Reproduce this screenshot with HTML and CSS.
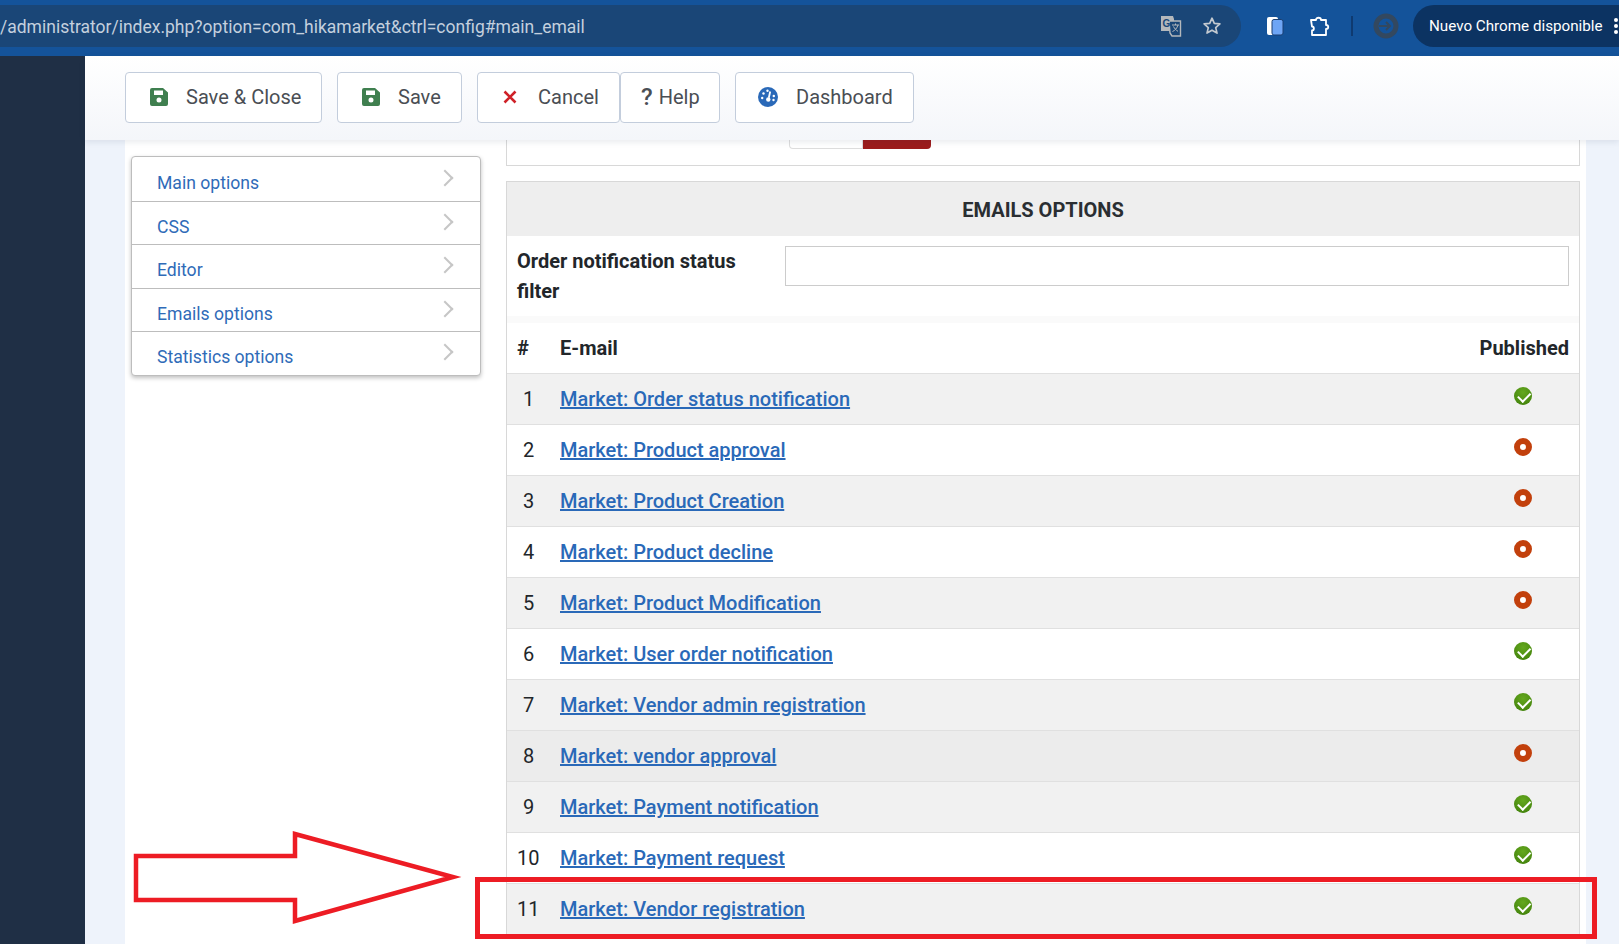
FILE: index.html
```
<!DOCTYPE html>
<html lang="en">
<head>
<meta charset="utf-8">
<title>HikaMarket configuration</title>
<link rel="stylesheet" href="styles.css">
</head>
<body>
<header class="chrome">
  <div class="address">
    <span class="url">/administrator/index.php?option=com_hikamarket&amp;ctrl=config#main_email</span>
    <svg class="ic-translate" viewBox="0 0 22 22" width="22" height="22">
      <path d="M1 1h12l1 3v12H1z" fill="#b4b8bc"/>
      <path d="M9 6h11.500v15H12l-2-3z" fill="#1a4677" stroke="#b4b8bc" stroke-width="1.400"/>
      <text x="2.600" y="12" class="ic-g">G</text>
      <path d="M12 10h7M15.500 8.500v1.500M18 10c-.8 3-3 5.500-5.500 6.500M13.500 11.500c1 2 2.500 3.700 4.500 4.800" fill="none" stroke="#b4b8bc" stroke-width="1"/>
    </svg>
    <svg class="ic-star" viewBox="0 0 20 20" width="20" height="20">
      <path d="M10 2.200l2.300 5.200 5.600.5-4.200 3.700 1.300 5.500-5-2.900-5 2.900 1.300-5.500L2.100 7.900l5.600-.5z" fill="none" stroke="#c3c9d0" stroke-width="1.700" stroke-linejoin="round"/>
    </svg>
  </div>
  <div class="tools">
    <svg class="ic-tabs" viewBox="0 0 18 20" width="18" height="20">
      <rect x="1" y="1" width="11" height="18" rx="2" fill="#fff"/>
      <rect x="6" y="3.500" width="11" height="15.500" rx="2" fill="#6ea5f5" stroke="#1a3f72" stroke-width="1"/>
    </svg>
    <svg class="ic-puzzle" viewBox="0 0 22 22" width="22" height="22">
      <path d="M2 5h5c0-3 5-3 5 0h5v5c3 0 3 4 0 4v6H3v-4.500c2.500 0 2.500-4 0-4z" fill="none" stroke="#fff" stroke-width="1.800" stroke-linejoin="round"/>
    </svg>
    <span class="divider"></span>
    <svg class="ic-profile" viewBox="0 0 26 26" width="26" height="26">
      <circle cx="13" cy="13" r="10" fill="none" stroke="#33485f" stroke-width="5"/>
      <path d="M6 13h11M13 9l4 4-4 4" fill="none" stroke="#33485f" stroke-width="2"/>
    </svg>
    <div class="update"><span>Nuevo Chrome disponible</span><b class="kebab"><i></i><i></i><i></i></b></div>
  </div>
</header>

<div class="app">
  <aside class="rail"></aside>
  <main class="main">
    <nav class="toolbar">
      <a class="btn btn-save-close"><svg class="ic-btn" viewBox="0 0 18 18" width="18" height="18"><path class="save" fill-rule="evenodd" d="M2 0h11l5 4.500V16a2 2 0 0 1-2 2H2a2 2 0 0 1-2-2V2a2 2 0 0 1 2-2zm2 2.500v4.500h9V2.500zM9 9.500a2.500 2.500 0 1 0 0 5 2.500 2.500 0 0 0 0-5z"/></svg><span>Save &amp; Close</span></a>
      <a class="btn btn-save"><svg class="ic-btn" viewBox="0 0 18 18" width="18" height="18"><path class="save" fill-rule="evenodd" d="M2 0h11l5 4.500V16a2 2 0 0 1-2 2H2a2 2 0 0 1-2-2V2a2 2 0 0 1 2-2zm2 2.500v4.500h9V2.500zM9 9.500a2.500 2.500 0 1 0 0 5 2.500 2.500 0 0 0 0-5z"/></svg><span>Save</span></a>
      <a class="btn btn-cancel"><svg class="ic-btn" viewBox="0 0 14 14" width="14" height="14"><path d="M1.500 1.500l11 11M12.500 1.500l-11 11" stroke="#cf2128" stroke-width="2.600" fill="none"/></svg><span>Cancel</span></a>
      <a class="btn btn-help"><b class="q">?</b><span>Help</span></a>
      <a class="btn btn-dash"><svg class="ic-btn" viewBox="0 0 20 20" width="20" height="20"><circle cx="10" cy="10" r="10" fill="#2a69b8"/><path d="M12.200 4.500L10.800 10.800" stroke="#fff" stroke-width="1.800"/><circle cx="10.300" cy="12.500" r="2.200" fill="#fff"/><circle cx="4.200" cy="11" r="1.200" fill="#fff"/><circle cx="5.500" cy="6.500" r="1.200" fill="#fff"/><circle cx="9.500" cy="3.800" r="1.200" fill="#fff"/><circle cx="15.800" cy="9" r="1.200" fill="#fff"/><circle cx="15.500" cy="13" r="1.200" fill="#fff"/></svg><span>Dashboard</span></a>
    </nav>

    <div class="panel">
      <ul class="menu">
        <li><a>Main options</a><i class="chev"></i></li>
        <li><a>CSS</a><i class="chev"></i></li>
        <li><a>Editor</a><i class="chev"></i></li>
        <li><a>Emails options</a><i class="chev"></i></li>
        <li><a>Statistics options</a><i class="chev"></i></li>
      </ul>
      <div class="content">
        <section class="prev">
          <div class="toggle"><span class="toggle-off"></span><span class="toggle-on"></span></div>
        </section>
        <section class="emails">
          <h2>EMAILS OPTIONS</h2>
          <div class="filter">
            <label>Order notification status filter</label>
            <div class="input"></div>
          </div>
          <table>
            <thead>
              <tr><th class="n">#</th><th>E-mail</th><th class="pub">Published</th></tr>
            </thead>
            <tbody>
              <tr class="alt"><td class="n">1</td><td><a>Market: Order status notification</a></td><td class="st"><i class="ok"></i></td></tr>
              <tr><td class="n">2</td><td><a>Market: Product approval</a></td><td class="st"><i class="off"></i></td></tr>
              <tr class="alt"><td class="n">3</td><td><a>Market: Product Creation</a></td><td class="st"><i class="off"></i></td></tr>
              <tr><td class="n">4</td><td><a>Market: Product decline</a></td><td class="st"><i class="off"></i></td></tr>
              <tr class="alt"><td class="n">5</td><td><a>Market: Product Modification</a></td><td class="st"><i class="off"></i></td></tr>
              <tr><td class="n">6</td><td><a>Market: User order notification</a></td><td class="st"><i class="ok"></i></td></tr>
              <tr class="alt"><td class="n">7</td><td><a>Market: Vendor admin registration</a></td><td class="st"><i class="ok"></i></td></tr>
              <tr class="hover"><td class="n">8</td><td><a>Market: vendor approval</a></td><td class="st"><i class="off"></i></td></tr>
              <tr class="alt"><td class="n">9</td><td><a>Market: Payment notification</a></td><td class="st"><i class="ok"></i></td></tr>
              <tr><td class="n">10</td><td><a>Market: Payment request</a></td><td class="st"><i class="ok"></i></td></tr>
              <tr class="alt"><td class="n">11</td><td><a>Market: Vendor registration</a></td><td class="st"><i class="ok"></i></td></tr>
            </tbody>
          </table>
        </section>
      </div>
    </div>
  </main>
</div>

<svg class="arrow" viewBox="0 0 340 100" width="340" height="100">
  <path d="M5 25H164V3L322 46 164 90V69H5z" fill="#fff" stroke="#ed1c24" stroke-width="4.500"/>
</svg>
<div class="redbox"></div>
</body>
</html>
```

FILE: styles.css
```
* { box-sizing: border-box; }
html, body { margin: 0; height: 944px; overflow: hidden; }
body { font-family: Roboto, "Liberation Sans", sans-serif; background: #eef3fb; color: #22262a; position: relative; }

/* browser chrome */
.chrome { height: 56px; background: #14539a; border-bottom: 1px solid #14539a; display: flex; align-items: flex-start; padding-top: 5px; }
.address { width: 1241px; height: 42px; background: #1a4677; border-radius: 0 21px 21px 0; display: flex; align-items: center; flex: none; }
.url { font-size: 17.500px; color: #c4d0de; flex: 1; white-space: nowrap; padding-top: 2px; }
.ic-translate { margin-right: 20px; }
.ic-g { font: bold 10px "Liberation Sans", sans-serif; fill: #1a4677; }
.ic-star { margin-right: 19px; }
.tools { display: flex; align-items: center; height: 42px; flex: 1; padding-left: 25px; }
.ic-puzzle { margin-left: 25px; }
.divider { width: 2px; height: 20px; background: #0f3a70; margin-left: 20px; }
.ic-profile { margin-left: 20px; }
.update { margin-left: 14px; flex: 1; height: 42px; background: #0c3362; border-radius: 21px 0 0 21px; color: #fff; font-size: 15.200px; display: flex; align-items: center; padding-left: 16px; white-space: nowrap; }
.kebab { display: flex; flex-direction: column; gap: 2px; margin-left: 11px; }
.kebab i { display: block; width: 4px; height: 4px; background: #fff; border-radius: 50%; }

/* app frame */
.app { display: flex; height: 888px; }
.rail { width: 85px; flex: none; background: #1f2f45; }
.main { flex: 1; min-width: 0; position: relative; }
.toolbar { height: 84px; position: relative; z-index: 2; display: flex; align-items: flex-start; padding: 16px 0 0 40px; background: linear-gradient(#fff, #f4f6fa); box-shadow: 0 2px 6px rgba(30,50,80,.1); }
.btn { height: 51px; display: flex; align-items: center; background: #fff; border: 1px solid #c3cddc; border-radius: 4px; font-size: 20px; color: #4a4e54; white-space: nowrap; padding-bottom: 2px; }
.btn-save-close { width: 197px; padding-left: 24px; margin-right: 15px; }
.btn-save { width: 125px; padding-left: 24px; margin-right: 15px; }
.btn-cancel { width: 143px; padding-left: 25px; }
.btn-help { width: 100px; padding-left: 20px; }
.btn-dash { width: 179px; padding-left: 22px; margin-left: 15px; }
.btn-save-close span, .btn-save span { margin-left: 18px; }
.btn-cancel span { margin-left: 21px; }
.btn-dash span { margin-left: 18px; }
.save { fill: #3f7f4f; }
.q { font-weight: 500; font-size: 24px; margin-right: 6px; }

/* panel */
.panel { width: 1461px; height: 804px; margin-left: 40px; background: #fff; display: flex; align-items: flex-start; padding-left: 6px; overflow: hidden; }
.menu { list-style: none; margin: 16px 0 0; padding: 0; width: 350px; flex: none; background: #fff; border: 1px solid #bdbdbd; border-radius: 4px; box-shadow: 0 2px 4px rgba(0,0,0,.25); }
.menu li { height: 43.600px; border-top: 1px solid #bdbdbd; display: flex; justify-content: space-between; padding: 0 29px 0 25px; position: relative; }
.menu li:first-child { border-top-color: transparent; }
.menu a { font-size: 17.600px; color: #2f6bb8; line-height: 50px; }
.chev { width: 12px; height: 12px; border-top: 2px solid #c6c6c6; border-right: 2px solid #c6c6c6; transform: rotate(45deg); margin-top: 14px; }
.content { width: 1074px; margin-left: 25px; flex: none; }
.prev { height: 26px; border: 1px solid #d8d8d8; border-top: 0; }
.toggle { display: flex; width: 142px; height: 9px; margin-left: 282px; }
.toggle-off { width: 74px; background: #fff; border: 1px solid #ddd; border-top: 0; border-radius: 0 0 0 4px; }
.toggle-on { width: 68px; background: #9c1c1c; border-radius: 0 0 4px 0; }
.emails { margin-top: 15px; border: 1px solid #d8d8d8; border-bottom: 0; }
.emails h2 { margin: 0; height: 54px; background: #eee; font-size: 20px; font-weight: 700; line-height: 57px; text-align: center; color: #2a2e32; }
.filter { height: 80px; display: flex; padding: 10px 10px 0 10px; background: #fff; }
.filter label { width: 268px; font-size: 20px; font-weight: 700; line-height: 30px; padding-right: 20px; flex: none; }
.input { flex: 1; height: 40px; border: 1px solid #ccc; }
table { width: 100%; border-collapse: collapse; font-size: 20px; table-layout: fixed; border-top: 7px solid #fafafa; }
th { text-align: left; font-size: 20px; font-weight: 700; height: 54px; border-bottom: 1px solid #e0e0e0; padding: 0; }
th.n { width: 53px; padding-left: 10px; }
th.pub { width: 200px; text-align: right; padding-right: 10px; }
td { height: 51px; border-bottom: 1px solid #e0e0e0; padding: 0; }
td.n { padding-left: 16px; }
tbody tr:nth-child(10) td.n, tbody tr:nth-child(11) td.n { padding-left: 10px; }
.alt { background: #f1f1f1; }
.hover { background: #ececec; }
td a { color: #2a69b8; text-decoration: underline; font-weight: 500; }
.st { padding-left: 135px; }
.ok, .off { display: block; width: 18px; height: 18px; border-radius: 50%; position: relative; top: -3px; }
.ok { background: radial-gradient(circle at 50% 30%, #64a81e, #3e7d0a); }
.ok::after { content: ""; position: absolute; left: 4px; top: 4.500px; width: 10px; height: 5.500px; border-left: 2.500px solid #fff; border-bottom: 2.500px solid #fff; transform: rotate(-45deg); }
.off { background: #fff; border: 6px solid #c2400c; }

/* annotations laid over the screenshot */
.arrow { position: absolute; left: 131px; top: 831px; }
.redbox { position: absolute; left: 475px; top: 877px; width: 1122px; height: 62px; border: 5px solid #ed1c24; }
```
